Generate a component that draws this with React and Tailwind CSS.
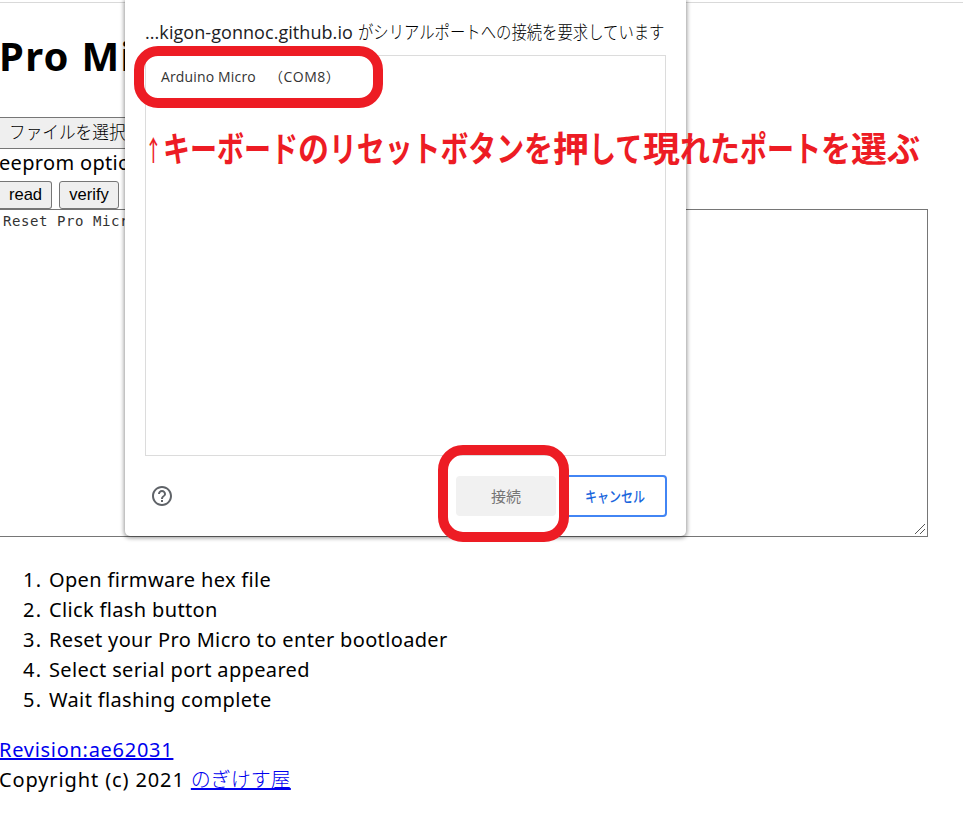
const steps = [
  'Open firmware hex file',
  'Click flash button',
  'Reset your Pro Micro to enter bootloader',
  'Select serial port appeared',
  'Wait flashing complete',
];

// Proportional kana: each run of the note and the width it takes.
const note = [
  ['キーボード', 135],
  ['の', 31],
  ['リセットボタン', 195],
  ['を', 29],
  ['押', 36],
  ['して', 54],
  ['現', 37],
  ['れた', 60],
  ['ポート', 81],
  ['を', 30],
  ['選', 36],
  ['ぶ', 33],
];
const NOTE_SIZE = 35;

function UpdaterPage() {
  return (
    <main className="flex h-[832px] flex-col border-t-2 border-transparent font-['Noto_Sans','Noto_Sans_CJK_JP',sans-serif] text-[20px] leading-[30px] text-black">
      <div className="h-px shrink-0 bg-[#d9d9d9]" />
      <h1 className="-ml-px mt-[23px] h-[61px] whitespace-nowrap text-[40px] font-bold leading-[60px] tracking-[1.3px]">Pro Micro</h1>
      <div className="mt-[30px] flex h-8 w-[150px] items-center rounded-r-[3px] border-y border-[#767676] bg-[#efefef] pb-[4px] pl-[9px]">
        <span className="origin-left scale-x-[0.925] whitespace-nowrap font-['Noto_Sans_CJK_JP',sans-serif] text-[18px] font-light leading-[26px]">ファイルを選択</span>
      </div>
      <p className="-ml-px h-[32px] whitespace-nowrap leading-[27px] tracking-[0.32px]">eeprom option</p>
      <div className="flex h-7 gap-[7px] font-['Liberation_Sans',sans-serif] text-[16.6px] leading-[26px]">
        <button className="w-[52px] rounded-r-[3px] border border-l-0 border-[#767676] bg-[#efefef]">read</button>
        <button className="w-[60px] rounded-[3px] border border-[#767676] bg-[#efefef]">verify</button>
      </div>
      <div className="relative h-[328px] w-[928px] shrink-0 border border-l-0 border-[#767676] pl-[3px] font-['DejaVu_Sans_Mono',monospace] text-[14px] leading-[23px] tracking-[0.57px] text-[#333]">
        Reset Pro Micro
        <svg className="absolute bottom-[1px] right-[1px]" width="12" height="12" viewBox="0 0 12 12" stroke="#555" strokeWidth="1">
          <path d="M1 11L11 1M6 11L11 6" />
        </svg>
      </div>
      <ol className="mt-[28px] list-none tracking-[0.35px]">
        {steps.map((text, i) => (
          <li key={text} className="flex">
            <span className="w-[49px] pl-[23px] tracking-[1.4px]">{i + 1}.</span>
            <span>{text}</span>
          </li>
        ))}
      </ol>
      <footer className="-ml-px mt-5">
        <a className="tracking-[0.72px] text-[#0000ee] underline">Revision:ae62031</a>
        <p className="whitespace-nowrap"><span className="tracking-[0.88px]">Copyright (c) 2021 </span><a className="font-light text-[#0000ee] underline">のぎけす屋</a></p>
      </footer>
    </main>
  );
}

function PortDialog() {
  return (
    <section className="absolute left-[125px] top-0 flex h-[536px] w-[561px] flex-col rounded-b-[5px] bg-white px-5 shadow-[0_1px_4px_1px_rgba(0,0,0,0.4)]">
      <h2 className="mt-[18px] flex h-[37px] shrink-0 whitespace-nowrap text-[18px] leading-[28px] text-[#202124]">
        <span className="w-[213px] font-['Open_Sans',sans-serif] tracking-[0.06px]">...kigon-gonnoc.github.io</span>
        <span className="w-[306px] origin-left scale-x-[0.853] font-['Noto_Sans_CJK_JP',sans-serif] font-light leading-[26px] text-black">がシリアルポートへの接続を要求しています</span>
      </h2>
      <div className="flex h-[401px] shrink-0 border border-[#dcdcdc] pl-[15px] pt-[9px] font-['Open_Sans','Noto_Sans_CJK_JP',sans-serif] text-[14px] leading-[24px] tracking-[0.15px] text-[#333]">
        <span className="w-[108px]">Arduino Micro</span>
        <span className="whitespace-nowrap tracking-[0.5px]">（COM8）</span>
      </div>
      <div className="mt-[19px] flex h-[42px] items-center">
        <svg className="ml-[5px] shrink-0" width="24" height="24" viewBox="0 0 24 24" fill="#5f6368">
          <path d="M11 18h2v-2h-2v2zm1-16C6.48 2 2 6.48 2 12s4.48 10 10 10 10-4.48 10-10S17.52 2 12 2zm0 18c-4.41 0-8-3.59-8-8s3.59-8 8-8 8 3.59 8 8-3.59 8-8 8zm0-14c-2.21 0-4 1.79-4 4h2c0-1.1.9-2 2-2s2 .9 2 2c0 2-3 1.75-3 5h2c0-2.25 3-2.5 3-5 0-2.21-1.79-4-4-4z" />
        </svg>
        <button className="ml-[282px] h-10 w-[100px] shrink-0 rounded-[4px] bg-[#f1f1f1] font-['Noto_Sans_CJK_JP',sans-serif] text-[15px] text-[#757575]">接続</button>
        <button className="ml-[7px] h-[42px] w-[104px] shrink-0 rounded-[4px] border-2 border-[#4285f4] font-['Noto_Sans_CJK_JP',sans-serif] text-[15px] font-medium text-[#1a66dd]">
          <span className="inline-block w-[60px] origin-left scale-x-[0.8] whitespace-nowrap text-left">キャンセル</span>
        </button>
      </div>
    </section>
  );
}

export default function App() {
  return (
    <div className="relative h-[832px] w-[963px] overflow-hidden bg-white">
      <UpdaterPage />
      <PortDialog />
      <div className="absolute left-[134px] top-[46px] h-[62px] w-[249px] rounded-[24px] border-[10px] border-[#ed1c24]" />
      <div className="absolute left-[438px] top-[445px] h-[97px] w-[131px] rounded-[25px] border-[10px] border-[#ed1c24]" />
      <p className="absolute left-[146px] top-[122px] flex whitespace-nowrap font-['Noto_Sans_CJK_JP',sans-serif] text-[35px] font-bold leading-[50px] text-[#ed1c24]">
        <span className="w-[17px] origin-left -translate-x-px translate-y-[2px] scale-x-[0.6] text-[28px] font-medium">↑</span>
        {note.map(([text, width], i) => (
          <span key={i} style={{ width }}>
            <span className="block origin-left" style={{ transform: `scaleX(${width / (text.length * NOTE_SIZE)})` }}>{text}</span>
          </span>
        ))}
      </p>
    </div>
  );
}
